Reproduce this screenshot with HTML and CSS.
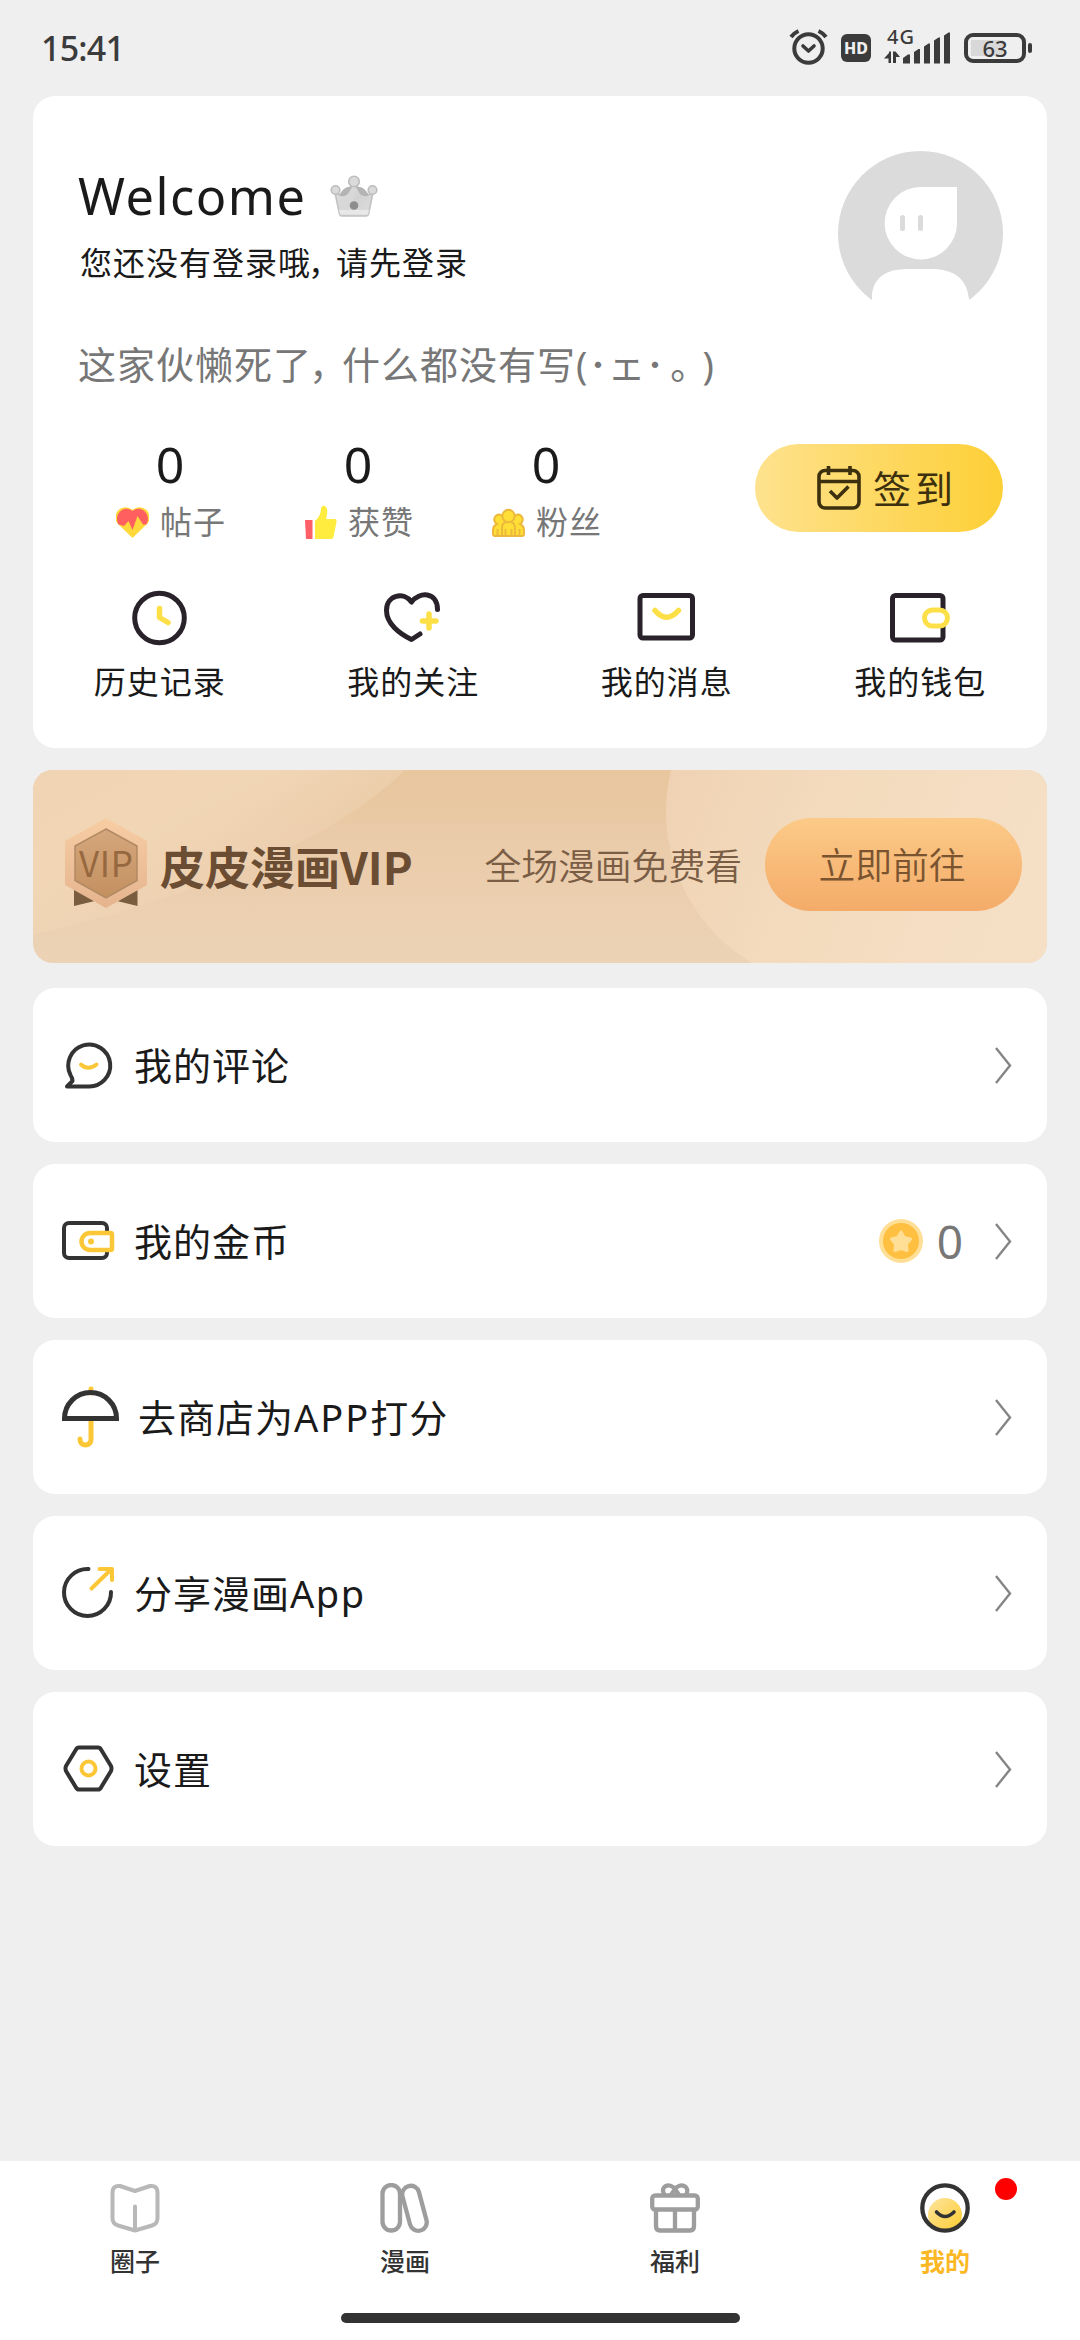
FILE: index.html
```html
<!DOCTYPE html>
<html lang="zh-CN">
<head>
<meta charset="utf-8">
<title>我的</title>
<link rel="stylesheet" href="styles.css">
</head>
<body>
<div class="screen">
  <header class="status">
    <span class="clock">15:41</span>
    <div class="status-icons">
      <svg class="alarm" width="40" height="38" viewBox="0 0 40 38" fill="none" stroke="#3b3b3b" stroke-linecap="round" stroke-linejoin="round">
        <circle cx="19.5" cy="20.500" r="14.200" stroke-width="4"/>
        <path d="M2 9Q5 5 9.500 3M37 9Q34 5 29.500 3" stroke-width="4" stroke-linecap="butt"/>
        <path d="M14 18L19.500 23L25 18" stroke-width="3.600"/>
      </svg>
      <span class="hd">HD</span>
      <div class="signal">
        <span class="net">4G</span>
        <svg width="68" height="36" viewBox="0 0 68 36" fill="#3b3b3b">
          <path d="M0 30.500L5 25V23.500H7V35H4.500V30.500ZM9 23.500H11.500L16 29H12V35H9Z"/>
          <path d="M19 30l5-3.500h2V35.500h-7zM30 24l4.500-3h1.500V35.500h-6zM40 18.500l4.500-3h1.500v20h-6zM50 12.500l4.500-3h1.500v26h-6zM60 7.500l4.500-3h1.500v31h-6z"/>
        </svg>
      </div>
      <div class="battery"><span>63</span></div>
    </div>
  </header>

  <main class="content">
    <section class="card profile">
      <div class="profile-top">
        <div class="names">
          <div class="hello"><span>Welcome</span>
            <svg width="48" height="42" viewBox="0 0 48 42">
              <defs><linearGradient id="cr" x1="0" x2="1" y1="0" y2="1"><stop offset="0" stop-color="#e4e4e4"/><stop offset=".5" stop-color="#d2d2d2"/><stop offset="1" stop-color="#dedede"/></linearGradient></defs>
              <path d="M5 18Q15 24 22 9H26Q33 24 43 18L38.500 39Q38 41 36 41H12Q10 41 9.500 39Z" fill="url(#cr)" stroke="#c2c2c2" stroke-width="1.600"/>
              <path d="M9 20Q15 10 22 12L18 19Q13 23 9 20ZM39 20Q33 10 26 12L30 19Q35 23 39 20Z" fill="#b4b4b4"/>
              <path d="M24 10V35H9.500L8 26Q18 22 24 10Z" fill="#d9d9d9" opacity=".7"/>
              <path d="M9 35H39L38 39.500H10Z" fill="#e8e8e8"/>
              <circle cx="24" cy="30.500" r="4.300" fill="#8d8d8d"/>
              <g fill="#dadada" stroke="#bdbdbd" stroke-width="1.600"><circle cx="24" cy="6.500" r="5.300"/><circle cx="5.500" cy="15" r="4.300"/><circle cx="42.500" cy="15" r="4.300"/></g>
            </svg>
          </div>
          <p class="login">您还没有登录哦<span class="cm">，</span>请先登录</p>
        </div>
        <svg class="avatar" width="165" height="165" viewBox="0 0 165 165">
          <circle cx="82.500" cy="82.500" r="82.500" fill="#dbdbdb"/>
          <path d="M82.500 36H119V72.500A36.200 36.200 0 1 1 82.500 36Z" fill="#fff"/>
          <path d="M34 149V142Q38 118 69 118H98Q128 120 131 148V165H34Z" fill="#fff"/>
          <rect x="62" y="64" width="5" height="16" rx="2.500" fill="#dbdbdb"/><rect x="80" y="64" width="5" height="16" rx="2.500" fill="#dbdbdb"/>
        </svg>
      </div>
      <p class="bio">这家伙懒死了<span class="cm">，</span>什么都没有写(<span class="face">･ェ･<span class="stop">｡</span></span>)</p>
      <div class="stats">
        <div class="stat"><b>0</b>
          <div class="stat-label">
            <svg width="33" height="34" viewBox="0 0 33 34"><path d="M16.500 33L2.500 19.500A9 9 0 0 1 16.500 5A9 9 0 0 1 30.500 19.500Z" fill="#ffd93b"/><path d="M2.500 19.500C-3 9 8-1 16.500 6C25-1 36 9 30.500 19.500H27L21.500 11L16.500 25L12.500 16L8 21Z" fill="#ff5f5f"/></svg>
            <span>帖子</span>
          </div>
        </div>
        <div class="stat"><b>0</b>
          <div class="stat-label">
            <svg width="33" height="34" viewBox="0 0 33 34"><path d="M1 15H8.500V34H2Z" fill="#ff5f66"/><path d="M11 34V16Q17 11 17 3Q18 0 21 1Q25 4 22 14H31Q33 14 32.500 17L29.500 32Q29 34 27 34Z" fill="#ffec3f"/></svg>
            <span>获赞</span>
          </div>
        </div>
        <div class="stat"><b>0</b>
          <div class="stat-label">
            <svg width="33" height="34" viewBox="0 0 33 34" fill="#ffdf35" stroke="#edb93d" stroke-width="2"><path d="M3 31Q1 31 1 29V25Q1 21 5 19A5 5 0 1 1 12 13H21A5 5 0 1 1 28 19Q32 21 32 25V29Q32 31 30 31Z"/><path d="M10 30V23Q10 18 14 17H19Q23 18 23 23V30" /><circle cx="16.500" cy="11" r="6.200"/><path d="M5.500 24V30M13.500 24V30M19.500 24V30M27.500 24V30M3 31H30" fill="none"/></svg>
            <span>粉丝</span>
          </div>
        </div>
        <button class="sign">
          <svg width="44" height="44" viewBox="0 0 44 44" fill="none" stroke="#3c300e" stroke-width="3.600" stroke-linecap="butt" stroke-linejoin="round"><rect x="2" y="4.500" width="40" height="37.500" rx="6"/><path d="M2 15.500H42M11.500 0V9M33 0V9"/><path d="M13 25L20 32L31.500 20.500"/></svg>
          <span>签到</span>
        </button>
      </div>
      <nav class="quick">
        <a><svg width="60" height="60" viewBox="0 0 60 60" fill="none" stroke-width="5"><circle cx="29.500" cy="30" r="24.800" stroke="#29222a"/><path d="M29.500 20.500V29.500L38 34.500" stroke="#fde047" stroke-width="5.500" stroke-linecap="round" stroke-linejoin="round"/></svg><span>历史记录</span></a>
        <a><svg width="60" height="60" viewBox="0 0 60 60" fill="none" stroke-width="5" stroke-linecap="round" stroke-linejoin="round"><path d="M54.500 21.500C54.500 3.500 36 3.500 28.500 14C21 3.500 3.500 6.500 3.500 22.500C3.500 36 17 46 28.500 51.500L37 46" stroke="#29222a"/><path d="M46 26V40M39.500 33H53" stroke="#fde047" stroke-width="5.500"/></svg><span>我的关注</span></a>
        <a><svg width="60" height="60" viewBox="0 0 60 60" fill="none" stroke-width="5"><rect x="3" y="7.500" width="52.500" height="42.500" rx="3" stroke="#29222a"/><path d="M18 22.500Q29.500 36 41.500 22.500" stroke="#fde047" stroke-width="5.500" stroke-linecap="round"/></svg><span>我的消息</span></a>
        <a><svg width="60" height="60" viewBox="0 0 60 60" fill="none" stroke-width="5"><rect x="2.500" y="7.500" width="50.500" height="44.500" rx="3" stroke="#29222a"/><rect x="34.500" y="22" width="23" height="16" rx="8" fill="#fff" stroke="#fde047"/></svg><span>我的钱包</span></a>
      </nav>
    </section>

    <section class="vip">
      <svg class="vip-bg" width="1014" height="193" viewBox="0 0 1014 193">
        <defs>
          <linearGradient id="vb" x2="0" y2="1"><stop offset="0" stop-color="#e8c69e"/><stop offset=".25" stop-color="#e9c9a3"/><stop offset=".3" stop-color="#eacaa8"/><stop offset="1" stop-color="#ecd3b6"/></linearGradient>
          <linearGradient id="vl" gradientUnits="userSpaceOnUse" x1="60" y1="0" x2="150" y2="165"><stop offset="0" stop-color="#f1d4b3"/><stop offset=".45" stop-color="#f1d6b6"/><stop offset="1" stop-color="#eed3b4" stop-opacity=".3"/></linearGradient>
          <linearGradient id="vr" x1="0" x2="1" y1="0" y2=".2"><stop offset="0" stop-color="#efd2b3"/><stop offset=".4" stop-color="#f3dabc"/><stop offset="1" stop-color="#f5dfc5"/></linearGradient>
        </defs>
        <rect width="1014" height="193" fill="url(#vb)"/>
        <path d="M0 0H372Q270 100 0 165Z" fill="url(#vl)"/>
        <path d="M638 0A176 176 0 0 0 719 193H1014V0Z" fill="url(#vr)"/>
      </svg>
      <svg class="badge" width="82" height="90" viewBox="0 0 82 90">
        <defs><linearGradient id="b1" x2="0" y2="1"><stop offset="0" stop-color="#f7cda4"/><stop offset="1" stop-color="#e5b48e"/></linearGradient><linearGradient id="b2" x2="0" y2="1"><stop offset="0" stop-color="#d5a77d"/><stop offset="1" stop-color="#c3905f"/></linearGradient></defs>
        <path d="M9 70V88L34 82ZM72.500 70V88L48 82Z" fill="#7a5c3e"/>
        <path d="M41 0L82 23V67L41 90L0 67V23Z" fill="url(#b1)"/>
        <path d="M41 11L72 28V62.500L41 80L10 62.500V28Z" fill="url(#b2)" stroke="#b08a64" stroke-width="1.500"/>
        <text x="41" y="59" text-anchor="middle" textLength="54" class="badge-text">VIP</text>
      </svg>
      <strong>皮皮漫画VIP</strong>
      <span class="vip-sub">全场漫画免费看</span>
      <button class="go">立即前往</button>
    </section>

    <a class="card row">
      <svg width="60" height="64" viewBox="0 0 60 64" fill="none" stroke="#333" stroke-width="4" stroke-linejoin="round" stroke-linecap="round"><path d="M7 53.500L12.500 48Q12.500 45 10.500 42A21 21 0 1 1 28 53.500Z"/><path d="M21 31.500Q28 38 36.500 31.500" stroke="#fcc737"/></svg>
      <span class="label">我的评论</span>
      <svg class="chev" viewBox="0 0 17 37"><path d="M1 1L15 18.500L1 36"/></svg>
    </a>
    <a class="card row">
      <svg width="60" height="64" viewBox="0 0 60 64" fill="none" stroke="#333" stroke-width="4"><rect x="4" y="14" width="43" height="35" rx="5"/><path d="M30 24H50.500Q52 24 52 25.500V39.500Q52 41 50.500 41H30A8.500 8.500 0 0 1 30 24Z" fill="#fff" stroke="#fcc737" stroke-width="4.500"/><circle cx="31" cy="32.500" r="3" fill="#fcc737" stroke="none"/></svg>
      <span class="label">我的金币</span>
      <svg class="coin" width="44" height="44" viewBox="0 0 44 44"><circle cx="22" cy="22" r="22" fill="#ffdf96"/><circle cx="22" cy="22" r="18" fill="#ffbf40"/><path d="M22 13L25.300 18.500L31.500 20L27.500 25L28 31.500L22 29.500L16 31.500L16.500 25L12.500 20L18.700 18.500Z" fill="#ffdf96" stroke="#ffdf96" stroke-width="3" stroke-linejoin="round"/></svg>
      <span class="count">0</span>
      <svg class="chev" viewBox="0 0 17 37"><path d="M1 1L15 18.500L1 36"/></svg>
    </a>
    <a class="card row wide">
      <svg width="60" height="64" viewBox="0 0 60 64" fill="none" stroke-width="5" stroke-linecap="round"><path d="M31 4V8M31 36V54.500A5.500 5.500 0 0 1 20 54.500V54" stroke="#fcc737"/><path d="M4.500 33.500A26 26 0 0 1 56.500 33.500Z" stroke="#333" stroke-linecap="butt"/></svg>
      <span class="label">去商店为<i>APP</i>打分</span>
      <svg class="chev" viewBox="0 0 17 37"><path d="M1 1L15 18.500L1 36"/></svg>
    </a>
    <a class="card row">
      <svg width="60" height="64" viewBox="0 0 60 64" fill="none" stroke-width="4" stroke-linecap="round" stroke-linejoin="round"><path d="M28.500 8A23.500 23.500 0 1 0 51 31" stroke="#333"/><path d="M31.500 27.500L51.500 8M39.500 8H52V19" stroke="#fcc737"/></svg>
      <span class="label">分享漫画<i class="app">App</i></span>
      <svg class="chev" viewBox="0 0 17 37"><path d="M1 1L15 18.500L1 36"/></svg>
    </a>
    <a class="card row">
      <svg width="60" height="64" viewBox="-1 0 60 64" fill="none" stroke-width="4" stroke-linejoin="round"><path d="M18 10.500Q16 10.500 15 12.500L5 29Q4 31.500 5 34L15 50.500Q16 52.500 18 52.500H37Q39 52.500 40 50.500L50 34Q51 31.500 50 29L40 12.500Q39 10.500 37 10.500Z" stroke="#333"/><circle cx="27.500" cy="31.500" r="7" stroke="#fcc737"/></svg>
      <span class="label">设置</span>
      <svg class="chev" viewBox="0 0 17 37"><path d="M1 1L15 18.500L1 36"/></svg>
    </a>
  </main>

  <footer class="tabbar">
    <nav class="tabs">
      <a><svg width="50" height="50" viewBox="0 0 50 50" fill="none" stroke="#b8b8b8" stroke-width="4" stroke-linejoin="round" stroke-linecap="round"><path d="M25 8L10 3Q2.500 2 2.500 10V35Q2.500 41 8 42.500L25 47.500L42 42.500Q47.500 41 47.500 35V10Q47.500 2 40 3ZM25 23.500V47"/></svg><span>圈子</span></a>
      <a><svg width="50" height="50" viewBox="0 0 50 50" fill="none" stroke="#9d9d9d" stroke-width="4.300"><rect x="2.500" y="2" width="17.500" height="45.500" rx="8.700"/><rect x="26" y="2.300" width="17" height="46" rx="8.500" transform="rotate(-15 34.500 25.300)"/></svg><span>漫画</span></a>
      <a><svg width="50" height="50" viewBox="0 0 50 50" fill="none" stroke="#9d9d9d" stroke-width="4.300"><rect x="2.200" y="12.500" width="45.600" height="14" rx="3"/><path d="M6 27V43Q6 47.500 10 47.500H40Q44 47.500 44 43V27M25 27V47M14.500 12C9 3 20-1 25 6C30-1 41 3 36 12M25 6L21 12M25 6L29 12"/></svg><span>福利</span></a>
      <a class="on"><svg width="50" height="50" viewBox="0 0 50 50" fill="none"><defs><linearGradient id="fc" x2="1" y2="1"><stop offset="0" stop-color="#fee5a0"/><stop offset="1" stop-color="#fccb2e"/></linearGradient></defs><circle cx="25" cy="32" r="17" fill="url(#fc)"/><circle cx="25" cy="25" r="22.700" stroke="#333" stroke-width="4.300"/><path d="M16.500 29Q25 38 34 29" stroke="#333" stroke-width="3.600" stroke-linecap="round"/></svg><span>我的</span><em class="dot"></em></a>
    </nav>
    <div class="home"></div>
  </footer>
</div>
</body>
</html>
```
FILE: styles.css
```css
* { box-sizing: border-box; margin: 0; padding: 0; }
body { background: #efefef; font-family: "Noto Sans", "Noto Sans CJK SC", sans-serif; color: #1a1a1a; }
svg { display: block; flex: none; }
button { border: 0; font: inherit; }
.screen { width: 1080px; height: 2340px; display: flex; flex-direction: column; overflow: hidden; }

.status { height: 96px; padding: 28px 48px 0 41px; display: flex; justify-content: space-between; align-items: flex-start; color: #3b3b3b; flex: none; }
.clock { font-size: 34px; line-height: 40px; font-weight: 500; letter-spacing: -0.8px; }
.status-icons { display: flex; align-items: flex-start; }
.alarm { margin: 0 12px 0 0; }
.hd { width: 30px; height: 28px; margin: 6px 13px 0 0; border-radius: 6px; background: #3b3b3b; color: #efefef; font-size: 16px; font-weight: 800; line-height: 28px; text-align: center; }
.signal { position: relative; width: 68px; margin-right: 12px; }
.net { position: absolute; left: 3px; top: -1px; font-size: 20px; line-height: 20px; font-weight: 500; letter-spacing: 1px; }
.battery { position: relative; width: 62px; height: 30px; margin-top: 5px; border: 4px solid #3b3b3b; border-radius: 9px; margin-right: 6px; background: linear-gradient(90deg, #d8d8d8 32px, transparent 32px) 3px 3px / 48px 16px no-repeat; text-align: center; font-size: 22px; line-height: 22px; font-weight: 500; }
.battery::after { content: ""; position: absolute; right: -10px; top: 6px; width: 4px; height: 10px; border-radius: 2px; background: #3b3b3b; }

.content { flex: 1; padding: 0 33px; display: flex; flex-direction: column; gap: 22px; }
.card { background: #fff; border-radius: 22px; flex: none; }
.profile { height: 652px; padding-top: 55px; }
.profile-top { display: flex; justify-content: space-between; height: 165px; padding: 0 44px 0 45px; }
.names { padding-top: 15px; }
.hello { display: flex; align-items: center; gap: 24px; font-size: 50.500px; line-height: 60px; letter-spacing: 1.500px; }
.login { margin: 17px 0 0 2px; font-size: 32px; line-height: 40px; letter-spacing: 1px; }
.login .cm { margin-left: -3px; letter-spacing: -4px; }
.bio { height: 50px; margin: 23px 0 0 45px; font-size: 38px; line-height: 50px; letter-spacing: 1px; color: #777; white-space: nowrap; }
.bio .cm { margin-left: -3px; letter-spacing: -5px; }
.face { font-family: "Noto Sans CJK SC", sans-serif; line-height: 1; letter-spacing: 0; }
.face .stop { display: inline-block; width: 32px; margin-left: 6px; }
.stats { display: flex; align-items: center; height: 108px; margin-top: 45px; padding: 0 44px 0 43px; }
.stat { width: 188px; display: flex; flex-direction: column; align-items: center; gap: 8px; height: 108px; }
.stat b { font-size: 50px; line-height: 60px; font-weight: 400; }
.stat-label { display: flex; align-items: center; gap: 11px; margin-left: 2px; font-size: 32px; line-height: 40px; letter-spacing: 1px; color: #777; }
.sign { margin-left: auto; width: 248px; height: 88px; border-radius: 44px; background: linear-gradient(90deg, #fee28e, #fdcf36); display: flex; align-items: center; gap: 12px; padding-left: 62px; color: #3c300e; font-size: 38px; letter-spacing: 4px; }
.sign span { line-height: 44px; }
.quick { display: grid; grid-template-columns: repeat(4, 1fr); margin-top: 46px; }
.quick a { display: flex; flex-direction: column; align-items: center; gap: 14px; font-size: 32px; line-height: 40px; letter-spacing: 1px; }

.vip { position: relative; z-index: 0; height: 193px; border-radius: 20px; overflow: hidden; display: flex; align-items: center; padding: 0 25px 0 32px; font-family: "Noto Sans CJK SC", sans-serif; color: #6b4d33; flex: none; margin-bottom: 3px; }
.vip-bg { position: absolute; left: 0; top: 0; z-index: -1; }
.badge { margin-top: -8px; }
.badge-text { font-family: "Noto Sans CJK SC", sans-serif; font-size: 35px; fill: #966840; }
.vip strong { margin: -2px 0 0 13px; font-size: 45px; line-height: 60px; font-weight: 700; }
.vip-sub { margin: -5px 23px 0 auto; font-size: 36.800px; line-height: 50px; color: #7a5d45; font-weight: 350; }
.go { width: 257px; height: 93px; border-radius: 46px; background: linear-gradient(#fcca88, #f4ab69); color: #7a5430; font-size: 36.800px; line-height: 50px; font-weight: 350; margin-top: -4px; padding: 0 3px 4px 0; }

.row { height: 154px; padding: 0 35px 0 27px; display: flex; align-items: center; }
.label { margin-left: 14px; flex: 1; font-size: 38px; line-height: 50px; letter-spacing: 1px; }
.wide .label { margin-left: 18px; }
.label i { font-style: normal; letter-spacing: 2px; }
.label .app { letter-spacing: 1.500px; }
.coin { margin-right: 14px; }
.count { font-size: 46px; line-height: 50px; color: #777; margin-right: 32px; }
.chev { width: 17px; height: 37px; fill: none; stroke: #858585; stroke-width: 2.400; }

.tabbar { height: 179px; background: #fff; flex: none; }
.tabs { display: grid; grid-template-columns: repeat(4, 1fr); height: 152px; padding-top: 22px; }
.tabs a { position: relative; display: flex; flex-direction: column; align-items: center; gap: 13px; font-size: 25px; line-height: 30px; font-weight: 500; color: #333; }
.tabs .on { color: #fbb824; }
.tabs .on span { font-weight: 600; }
.dot { position: absolute; left: 185px; top: -5px; width: 22px; height: 22px; border-radius: 50%; background: #f00; }
.home { width: 399px; height: 10px; border-radius: 5px; background: #333; margin: 0 auto; }
```
